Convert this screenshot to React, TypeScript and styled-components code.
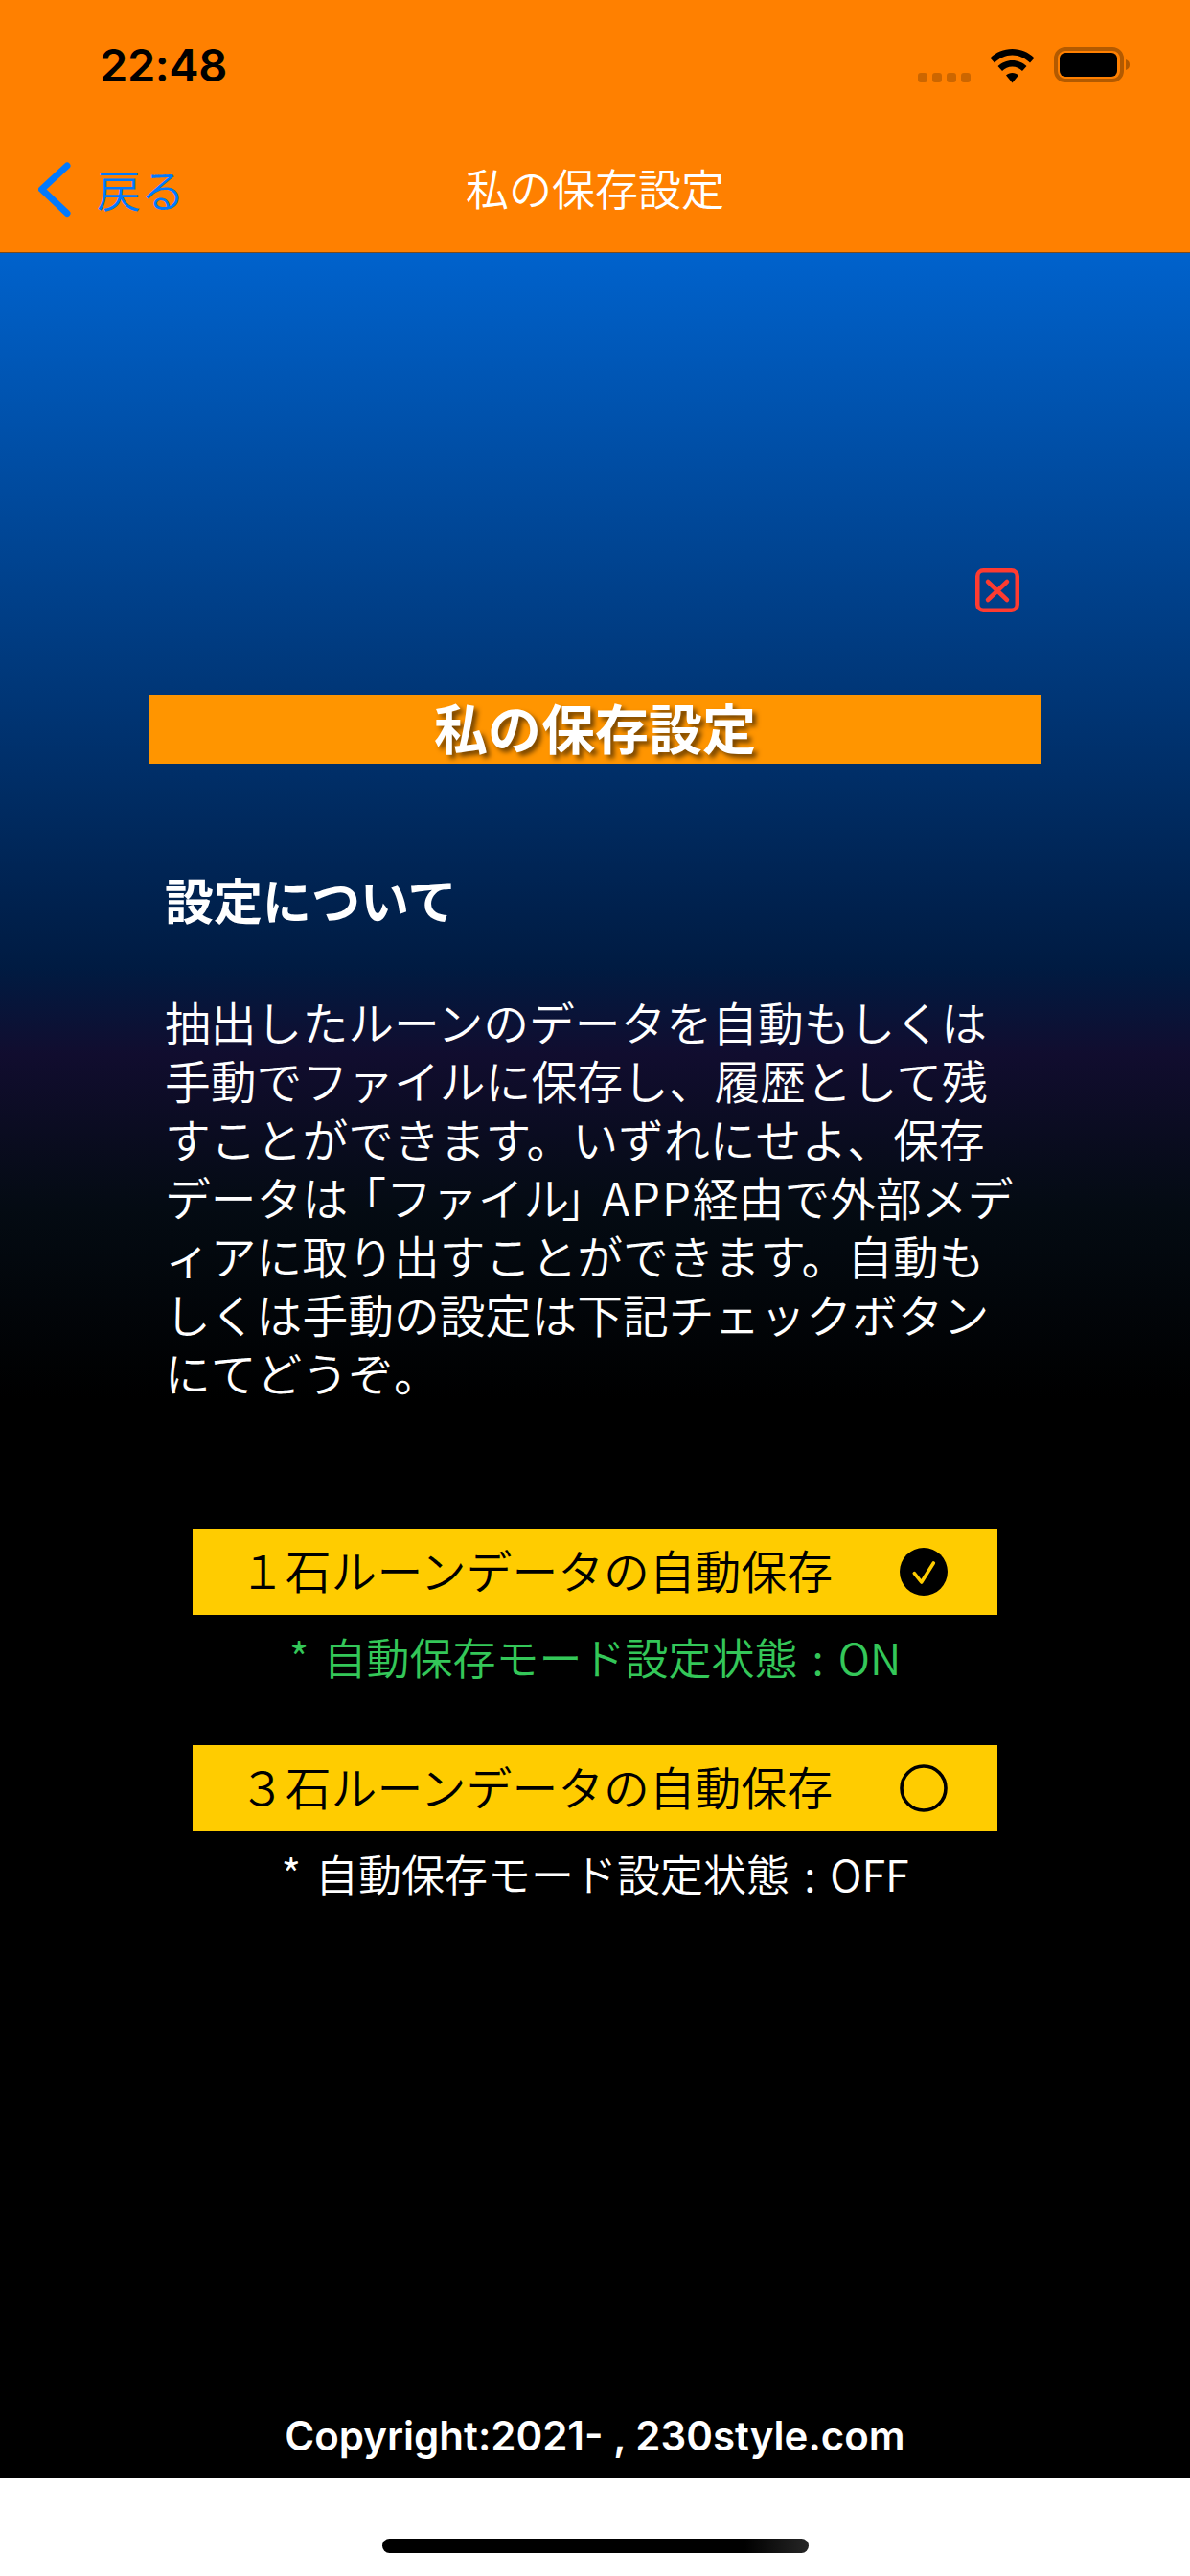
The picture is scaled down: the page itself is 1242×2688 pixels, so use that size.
import styled, { createGlobalStyle } from 'styled-components'

const GlobalStyle = createGlobalStyle`
  html, body {
    margin: 0;
    padding: 0;
    background: #fff;
  }
  body {
    font-family: "Noto Sans CJK JP", "Liberation Sans", sans-serif;
    font-weight: 350;
  }
`

const Screen = styled.div`
  width: 1242px;
  height: 2688px;
  display: flex;
  flex-direction: column;
  overflow: hidden;
`

const Header = styled.header`
  flex: none;
  height: 264px;
  box-sizing: border-box;
  background: #ff8000;
  border-bottom: 1px solid #7a4a1a;
`

const StatusBar = styled.div`
  height: 132px;
  box-sizing: border-box;
  padding: 44px 62px 0 104px;
  display: flex;
  justify-content: space-between;
  align-items: flex-start;
`

const Time = styled.span`
  font-family: Inter, "Liberation Sans", sans-serif;
  font-size: 47px;
  font-weight: 600;
  letter-spacing: -0.4px;
  line-height: 48px;
  color: #000;
`

const StatusIcons = styled.div`
  display: flex;
  align-items: flex-end;
  gap: 20px;
  padding-top: 5px;
`

const Dots = styled.div`
  display: flex;
  gap: 5px;
  padding-bottom: 1px;
`

const Dot = styled.i`
  width: 10px;
  height: 10px;
  border-radius: 3px;
  background: #cc6600;
`

const NavBar = styled.nav`
  height: 131px;
  display: grid;
  grid-template-columns: 1fr auto 1fr;
  align-items: center;
`

const BackLink = styled.a`
  display: flex;
  align-items: center;
  gap: 27px;
  padding-left: 40px;
  color: #007aff;
`

const BackLabel = styled.span`
  padding-bottom: 3px;
  font-size: 46px;
  line-height: 60px;
`

const NavTitle = styled.h1`
  margin: 0;
  padding-bottom: 3px;
  color: #fff;
  font-size: 45px;
  font-weight: 350;
  line-height: 60px;
`

const Main = styled.main`
  flex: 1;
  display: flex;
  flex-direction: column;
  background: linear-gradient(
    180deg,
    #0062cc 0%,
    #001b42 32.1%,
    #110d2f 36%,
    #040b13 42.9%,
    #000 51.5%
  );
`

const CloseRow = styled.div`
  display: flex;
  justify-content: flex-end;
  padding: 329px 178px 0 0;
`

const Banner = styled.h2`
  margin: 86px 156px 0;
  height: 72px;
  background: #ff9500;
  color: #fff;
  font-size: 56px;
  font-weight: 700;
  line-height: 65px;
  text-align: center;
  text-shadow: 4px 4px 5px rgba(0, 0, 0, 0.55);
`

const Info = styled.section`
  padding: 111px 0 0 172px;
  color: #fff;
`

const InfoTitle = styled.h3`
  margin: 0;
  font-size: 51px;
  font-weight: 700;
  line-height: 61px;
`

const InfoText = styled.p`
  margin: 66px 0 0;
  font-size: 47.8px;
  line-height: 61px;
  white-space: nowrap;
`

const OpenBracket = styled.span`
  margin-left: 16px;
  font-feature-settings: 'halt';
`

const CloseBracket = styled.span`
  margin: 0 18px 0 -8px;
  font-feature-settings: 'halt';
`

const Latin = styled.span`
  letter-spacing: 2px;
`

const Options = styled.section`
  padding: 133px 201px 0;
  display: flex;
  flex-direction: column;
  gap: 62px;
`

const Option = styled.div`
  display: flex;
  flex-direction: column;
  gap: 14px;
`

const OptionRow = styled.div`
  height: 90px;
  box-sizing: border-box;
  padding: 0 52px 0 49px;
  display: flex;
  align-items: center;
  justify-content: space-between;
  background: #ffcc00;
  color: #000;
`

const OptionLabel = styled.span`
  margin-bottom: 6px;
  font-size: 47.8px;
`

const Status = styled.div<{ $on: boolean }>`
  color: ${(p) => (p.$on ? '#34c759' : '#fff')};
  font-size: 45px;
  line-height: 60px;
  word-spacing: 5px;
  text-align: center;
`

const Copyright = styled.div`
  margin-top: auto;
  padding-bottom: 20px;
  color: #fff;
  font-family: Inter, "Liberation Sans", sans-serif;
  font-size: 42px;
  font-weight: 600;
  line-height: 48px;
  text-align: center;
`

const HomeArea = styled.footer`
  flex: none;
  height: 102px;
  display: flex;
  justify-content: center;
  padding-top: 63px;
  box-sizing: border-box;
  background: #fff;
`

const HomeBar = styled.div`
  width: 445px;
  height: 15px;
  border-radius: 8px;
  background: linear-gradient(90deg, #000 85%, #262626 100%);
`

const WifiIcon = () => (
  <svg width="47" height="36" viewBox="0 0 47 36" fill="#000">
    <path d="M0.5 9.5C6.5 3.5 14.5 0 23.5 0C32.5 0 40.5 3.5 46.5 9.5L42 14.5C37 9.5 30.5 6.5 23.5 6.5C16.5 6.5 10 9.5 5 14.5Z" />
    <path d="M8.5 18C12.5 14.5 17.5 12 23.5 12C29.5 12 34.5 14.5 38.5 18L34 23C31.5 20.5 27.5 18.5 23.5 18.5C19.5 18.5 15.5 20.5 13 23Z" />
    <path d="M17 27.5C18.5 26 21 25 23.5 25C26 25 28.5 26 30 27.5L23.5 35.5Z" />
  </svg>
)

const BatteryIcon = () => (
  <svg width="80" height="38" viewBox="0 0 80 38">
    <rect x="2" y="2" width="69" height="33" rx="10" fill="none" stroke="#b35a00" strokeWidth="4" />
    <rect x="6" y="6" width="60" height="25" rx="6" fill="#000" />
    <path d="M75 13C78 14 79 16 79 18.5C79 21 78 23 75 24Z" fill="#b35a00" />
  </svg>
)

const BackChevron = () => (
  <svg width="34" height="58" viewBox="0 0 34 58" fill="none" stroke="#007aff" strokeWidth="7" strokeLinecap="round" strokeLinejoin="round">
    <path d="M30 4L3.5 28.5L30 53.5" />
  </svg>
)

const CloseIcon = () => (
  <svg width="46" height="46" viewBox="0 0 46 46" fill="none" stroke="#ff3b30" strokeWidth="4.5" strokeLinecap="round">
    <rect x="2.25" y="2.25" width="41.5" height="41.5" rx="6" />
    <path d="M13 14L33 33M33 14L13 33" />
  </svg>
)

const CheckedIcon = () => (
  <svg width="50" height="50" viewBox="0 0 50 50">
    <circle cx="25" cy="25" r="25" fill="#000" />
    <path d="M15.3 26.7L22.7 36L35.3 16" fill="none" stroke="#ffcc00" strokeWidth="3.6" strokeLinecap="round" strokeLinejoin="round" />
  </svg>
)

const UncheckedIcon = () => (
  <svg width="50" height="50" viewBox="0 0 50 50">
    <circle cx="25" cy="25" r="23" fill="none" stroke="#000" strokeWidth="3.6" />
  </svg>
)

const options = [
  { label: '１石ルーンデータの自動保存', on: true },
  { label: '３石ルーンデータの自動保存', on: false },
]

export default function App() {
  return (
    <Screen>
      <GlobalStyle />
      <Header>
        <StatusBar>
          <Time>22:48</Time>
          <StatusIcons>
            <Dots>
              <Dot />
              <Dot />
              <Dot />
              <Dot />
            </Dots>
            <WifiIcon />
            <BatteryIcon />
          </StatusIcons>
        </StatusBar>
        <NavBar>
          <BackLink>
            <BackChevron />
            <BackLabel>戻る</BackLabel>
          </BackLink>
          <NavTitle>私の保存設定</NavTitle>
        </NavBar>
      </Header>
      <Main>
        <CloseRow>
          <CloseIcon />
        </CloseRow>
        <Banner>私の保存設定</Banner>
        <Info>
          <InfoTitle>設定について</InfoTitle>
          <InfoText>
            抽出したルーンのデータを自動もしくは
            <br />
            手動でファイルに保存し、履歴として残
            <br />
            すことができます。いずれにせよ、保存
            <br />
            データは<OpenBracket>「</OpenBracket>ファイル<CloseBracket>」</CloseBracket>
            <Latin>APP</Latin>経由で外部メデ
            <br />
            ィアに取り出すことができます。自動も
            <br />
            しくは手動の設定は下記チェックボタン
            <br />
            にてどうぞ。
          </InfoText>
        </Info>
        <Options>
          {options.map((o) => (
            <Option key={o.label}>
              <OptionRow>
                <OptionLabel>{o.label}</OptionLabel>
                {o.on ? <CheckedIcon /> : <UncheckedIcon />}
              </OptionRow>
              <Status $on={o.on}>* 自動保存モード設定状態 : {o.on ? 'ON' : 'OFF'}</Status>
            </Option>
          ))}
        </Options>
        <Copyright>Copyright:2021- , 230style.com</Copyright>
      </Main>
      <HomeArea>
        <HomeBar />
      </HomeArea>
    </Screen>
  )
}
